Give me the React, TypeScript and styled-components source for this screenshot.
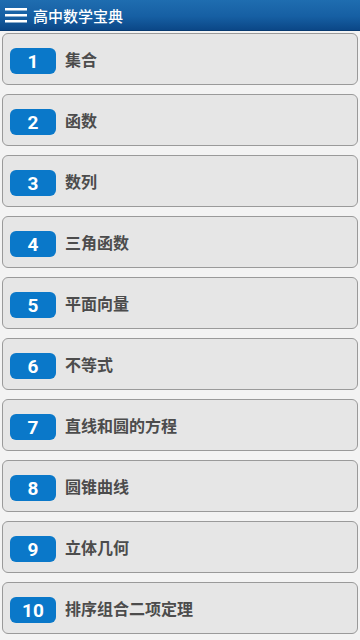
import styled, { createGlobalStyle } from 'styled-components';

const CHAPTERS = [
  '集合',
  '函数',
  '数列',
  '三角函数',
  '平面向量',
  '不等式',
  '直线和圆的方程',
  '圆锥曲线',
  '立体几何',
  '排序组合二项定理',
];

const GlobalStyle = createGlobalStyle`
  html, body {
    margin: 0;
    padding: 0;
    background: #f3f3f3;
    font-family: Roboto, "Noto Sans", "Noto Sans CJK SC", sans-serif;
  }
`;

const MenuIcon = () => (
  <svg width="22" height="18" viewBox="0 0 22 18">
    <rect x="0" y="2" width="22" height="2.5" fill="#fff" />
    <rect x="0" y="8" width="22" height="2.5" fill="#fff" />
    <rect x="0" y="14" width="22" height="2.5" fill="#fff" />
  </svg>
);

export default function App() {
  return (
    <>
      <GlobalStyle />
      <Page>
        <ActionBar>
          <MenuIcon />
          <Title>高中数学宝典</Title>
        </ActionBar>
        <List>
          {CHAPTERS.map((name, i) => (
            <Card key={name}>
              <Badge>{i + 1}</Badge>
              <Label>{name}</Label>
            </Card>
          ))}
        </List>
      </Page>
    </>
  );
}

const Page = styled.div`
  width: 360px;
  height: 640px;
  overflow: hidden;
  background: #f3f3f3;
`;

const ActionBar = styled.div`
  height: 31px;
  box-sizing: border-box;
  display: flex;
  align-items: center;
  gap: 6px;
  padding-left: 5px;
  background: linear-gradient(to bottom, #1f6db0 0%, #165fa3 55%, #0b4787 100%);
  border-bottom: 1px solid #083a70;
`;

const Title = styled.span`
  color: #fff;
  font-size: 15px;
  font-family: "Noto Sans CJK SC", sans-serif;
  font-weight: 500;
  line-height: 1;
  padding-top: 1px;
`;

const List = styled.div`
  display: flex;
  flex-direction: column;
  gap: 9px;
  padding: 2px 2px 0;
`;

const Card = styled.div`
  height: 52px;
  box-sizing: border-box;
  display: flex;
  align-items: center;
  gap: 9px;
  padding: 4px 0 0 7px;
  background: #e6e6e6;
  border: 1.5px solid #9a9a9a;
  border-radius: 6px;
`;

const Badge = styled.div`
  width: 46px;
  height: 26px;
  border-radius: 6px;
  background: #0a78c9;
  color: #fff;
  display: flex;
  align-items: center;
  justify-content: center;
  font-family: Roboto, "Noto Sans", sans-serif;
  font-weight: bold;
  font-size: 19px;
  line-height: 1;
`;

const Label = styled.span`
  color: #4c4c4c;
  font-family: "Noto Sans CJK SC", sans-serif;
  font-weight: bold;
  font-size: 16px;
  line-height: 1;
  margin-top: -4px;
`;
